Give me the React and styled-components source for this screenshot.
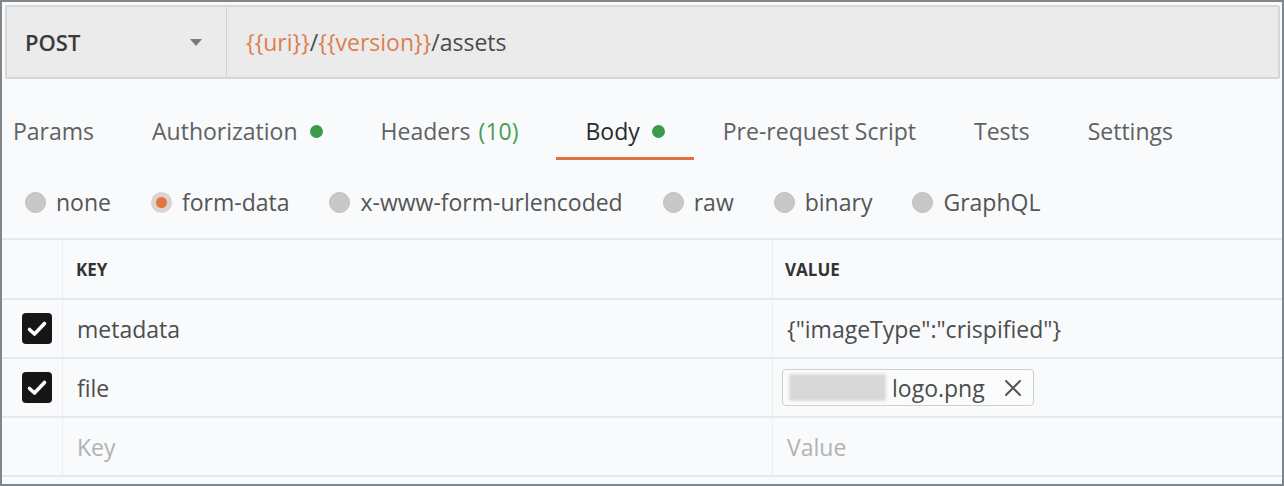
import styled, { createGlobalStyle } from 'styled-components'

const GlobalStyle = createGlobalStyle`
  html, body {
    margin: 0;
    padding: 0;
    background: #f8fafb;
  }
  body {
    font-family: "Open Sans", "Liberation Sans", sans-serif;
  }
`

const Frame = styled.div`
  width: 1284px;
  height: 486px;
  box-sizing: border-box;
  border: 2px solid #7f868c;
  background: #f8fafb;
  overflow: hidden;
`

const UrlBar = styled.div`
  display: flex;
  height: 74px;
  box-sizing: border-box;
  margin: 3px 2px 0 3px;
  border: 2px solid #d6d6d6;
  border-radius: 2px;
  background: #ebebeb;
`

const Method = styled.div`
  display: flex;
  align-items: center;
  justify-content: space-between;
  width: 220px;
  box-sizing: border-box;
  padding: 0 24px 0 18px;
  border-right: 1px solid #d2d2d2;
  font-size: 22px;
  font-weight: 600;
  color: #3a3a3a;
`

const Caret = styled.span`
  width: 0;
  height: 0;
  border-left: 6px solid transparent;
  border-right: 6px solid transparent;
  border-top: 7px solid #7a7a7a;
`

const Url = styled.div`
  display: flex;
  align-items: center;
  padding-left: 19px;
  font-size: 23px;
  color: #4a4a4a;
`

const Variable = styled.span`
  color: #dd7d50;
`

const Tabs = styled.div`
  display: flex;
  margin-top: 37px;
  padding-left: 11px;
`

const Tab = styled.div`
  display: flex;
  align-items: center;
  padding: 0 29px 11px;
  border-bottom: 3px solid ${p => (p.$active ? '#e0703c' : 'transparent')};
  font-size: 23px;
  line-height: 30px;
  color: ${p => (p.$active ? '#2a2a2a' : '#616161')};
  &:first-child {
    padding-left: 0;
  }
`

const Count = styled.span`
  margin: 0 9px 0 8px;
  color: #4e9b58;
`

const Dot = styled.span`
  display: inline-block;
  width: 13px;
  height: 13px;
  margin-left: 12px;
  border-radius: 50%;
  background: #3b9a4b;
`

const Radios = styled.div`
  display: flex;
  align-items: center;
  gap: 40px;
  height: 78px;
  box-sizing: border-box;
  padding: 6px 0 0 23px;
`

const Option = styled.label`
  display: flex;
  align-items: center;
  gap: 10px;
  font-size: 23px;
  color: #555;
`

const Radio = styled.span`
  width: 21px;
  height: 21px;
  box-sizing: border-box;
  border-radius: 50%;
  background: ${p => (p.$checked ? '#e2753e' : '#c8c8c8')};
  border: ${p => (p.$checked ? '5px solid #dcd2ce' : '1px solid #bdbdbd')};
`

const Table = styled.div`
  border-top: 2px solid #e6e9eb;
`

const Row = styled.div`
  display: grid;
  grid-template-columns: 60px 710px 1fr;
  height: ${p => p.$h}px;
  box-sizing: border-box;
  border-bottom: 2px solid #e6e9eb;
`

const Cell = styled.div`
  display: flex;
  align-items: center;
  padding-left: ${p => p.$pad ?? 13}px;
  border-left: 1px solid #eceff1;
  font-size: ${p => (p.$head ? 17 : 23)}px;
  font-weight: ${p => (p.$head ? 700 : 400)};
  color: ${p => (p.$muted ? '#b2b2b2' : p.$head ? '#333' : '#4d4d4d')};
  &:first-child {
    border-left: none;
  }
`

const Check = styled.span`
  display: flex;
  align-items: center;
  justify-content: center;
  width: 30px;
  height: 31px;
  border-radius: 4px;
  background: #161616;
`

const FileChip = styled.div`
  display: flex;
  align-items: center;
  height: 37px;
  width: 252px;
  box-sizing: border-box;
  margin-left: -5px;
  padding: 0 10px 0 6px;
  border: 1px solid #cfcfcf;
  border-radius: 4px;
  background: #fafbfb;
`

const Blurred = styled.span`
  width: 97px;
  height: 27px;
  margin-right: 6px;
  border-radius: 2px;
  background: #d8d8d8;
  filter: blur(1.5px);
`

const FileName = styled.span`
  flex: 1;
  font-size: 23px;
  color: #4d4d4d;
`

const CheckMark = () => (
  <Check>
    <svg width="22" height="20" viewBox="0 0 22 20">
      <polyline points="3.5,10.5 8.5,15 18.5,4.5" fill="none" stroke="#fff" strokeWidth="3.6" strokeLinecap="round" strokeLinejoin="round" />
    </svg>
  </Check>
)

const RemoveIcon = () => (
  <svg width="20" height="20" viewBox="0 0 20 20">
    <path d="M3 3L17 17M17 3L3 17" stroke="#555" strokeWidth="2" strokeLinecap="round" />
  </svg>
)

const tabs = [
  { label: 'Params' },
  { label: 'Authorization', dot: true },
  { label: 'Headers', count: '(10)' },
  { label: 'Body', dot: true, active: true },
  { label: 'Pre-request Script' },
  { label: 'Tests' },
  { label: 'Settings' },
]

const modes = ['none', 'form-data', 'x-www-form-urlencoded', 'raw', 'binary', 'GraphQL']

export default function App() {
  return (
    <>
      <GlobalStyle />
      <Frame>
        <UrlBar>
          <Method>
            POST
            <Caret />
          </Method>
          <Url>
            <Variable>{'{{uri}}'}</Variable>/<Variable>{'{{version}}'}</Variable>/assets
          </Url>
        </UrlBar>

        <Tabs>
          {tabs.map(t => (
            <Tab key={t.label} $active={t.active}>
              {t.label}
              {t.count && <Count>{t.count}</Count>}
              {t.dot && <Dot />}
            </Tab>
          ))}
        </Tabs>

        <Radios>
          {modes.map(m => (
            <Option key={m}>
              <Radio $checked={m === 'form-data'} />
              {m}
            </Option>
          ))}
        </Radios>

        <Table>
          <Row $h={60}>
            <Cell />
            <Cell $head>KEY</Cell>
            <Cell $head $pad={12}>VALUE</Cell>
          </Row>
          <Row $h={59}>
            <Cell $pad={20}><CheckMark /></Cell>
            <Cell $pad={14}>metadata</Cell>
            <Cell $pad={14}>{'{"imageType":"crispified"}'}</Cell>
          </Row>
          <Row $h={59}>
            <Cell $pad={20}><CheckMark /></Cell>
            <Cell $pad={14}>file</Cell>
            <Cell $pad={14}>
              <FileChip>
                <Blurred />
                <FileName>logo.png</FileName>
                <RemoveIcon />
              </FileChip>
            </Cell>
          </Row>
          <Row $h={59}>
            <Cell />
            <Cell $pad={14} $muted>Key</Cell>
            <Cell $pad={14} $muted>Value</Cell>
          </Row>
        </Table>
      </Frame>
    </>
  )
}
